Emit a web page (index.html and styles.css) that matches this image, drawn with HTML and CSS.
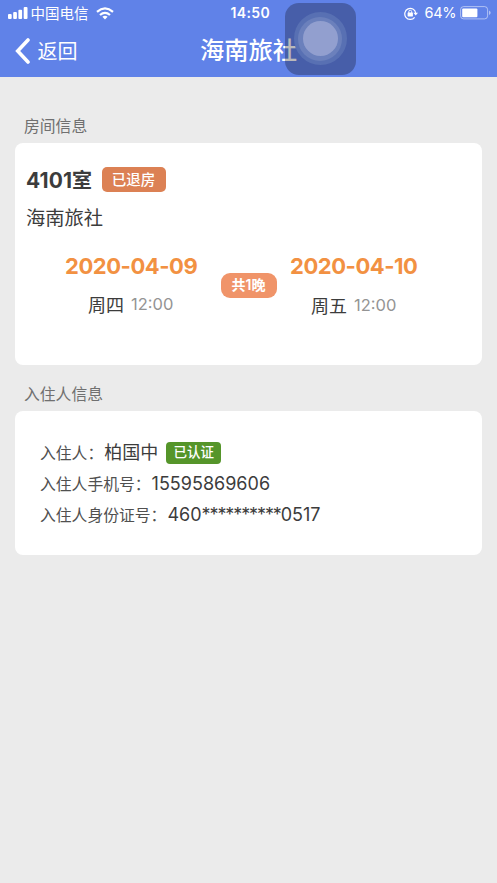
FILE: index.html
```html
<!DOCTYPE html>
<html lang="zh-CN">
<head>
<meta charset="utf-8">
<title>海南旅社</title>
<link rel="stylesheet" href="styles.css">
</head>
<body>
<header class="header">
  <div class="status">
    <div class="status-left">
      <svg class="signal" viewBox="0 0 20 12" fill="#fff"><rect x="0" y="7" width="3.7" height="5" rx="1"/><rect x="5.2" y="5" width="3.7" height="7" rx="1"/><rect x="10.4" y="2.8" width="3.7" height="9.2" rx="1"/><rect x="15.7" y="0" width="3.8" height="12" rx="1"/></svg>
      <span class="carrier">中国电信</span>
      <svg class="wifi" viewBox="0 0 18 13" fill="none" stroke="#fff" stroke-width="2.3"><path d="M1 4.8Q9-2 17 4.8"/><path d="M4 8Q9 3.7 14 8"/><path d="M6.4 9.7Q9 7.6 11.6 9.7L9 12.4Z" fill="#fff" stroke="none"/></svg>
    </div>
    <span class="clock">14:50</span>
    <div class="status-right">
      <svg class="lock" viewBox="0 0 14 13" fill="none" stroke="#fff"><path d="M10.6 10.3A5.5 5.5 0 1 1 11.7 6" stroke-width="1.2"/><path d="M9.4 5.7h4.6l-2.3 2.8z" fill="#fff" stroke="none"/><rect x="3.6" y="5.5" width="5.3" height="4" rx=".4" fill="#fff" stroke="none"/><path d="M4.8 6V4.7a1.45 1.45 0 0 1 2.9 0V6" stroke-width=".9"/></svg>
      <span class="percent">64%</span>
      <svg class="battery" viewBox="0 0 32 14"><rect x=".6" y=".6" width="27" height="12.3" rx="3" fill="none" stroke="#fff" stroke-opacity=".5"/><rect x="2.2" y="2.4" width="15.2" height="8.8" rx="1" fill="#fff"/><path d="M29 4.5q1.7.8 1.7 2.3T29 9.1z" fill="#fff" fill-opacity=".5"/></svg>
    </div>
  </div>
  <nav class="nav">
    <a class="back"><svg class="chevron" viewBox="0 0 16 26"><path d="M13 2 2.7 13 13 24" fill="none" stroke="#fff" stroke-width="3.6" stroke-linecap="round" stroke-linejoin="miter"/></svg><span>返回</span></a>
    <h1 class="title">海南旅社</h1>
  </nav>
  <div class="assist"><div class="ring ring-outer"><div class="ring ring-middle"><div class="ring ring-inner"></div></div></div></div>
</header>
<main class="content">
  <h2 class="label">房间信息</h2>
  <section class="card room">
    <div class="room-head"><strong class="room-name"><span class="room-number">4101</span>室</strong><span class="tag tag-out">已退房</span></div>
    <div class="hotel">海南旅社</div>
    <div class="stay">
      <div class="day day-in"><div class="date">2020-04-09</div><div class="time"><span>周四</span><span class="hour">12:00</span></div></div>
      <span class="nights">共1晚</span>
      <div class="day day-out"><div class="date">2020-04-10</div><div class="time time-out"><span>周五</span><span class="hour">12:00</span></div></div>
    </div>
  </section>
  <h2 class="label label-guest">入住人信息</h2>
  <section class="card guest">
    <div class="row"><span class="key">入住人：</span><span class="name">柏国中</span><span class="tag tag-ok">已认证</span></div>
    <div class="row"><span class="key">入住人手机号：</span><span class="value phone">15595869606</span></div>
    <div class="row"><span class="key">入住人身份证号：</span><span class="value">460<span class="mask">**********</span>0517</span></div>
  </section>
</main>
</body>
</html>
```
FILE: styles.css
```css
* { box-sizing: border-box; }
body { margin: 0; min-height: 883px; background: #ebebeb; color: #3c3c3c; font-family: Inter, "Noto Sans CJK SC", sans-serif; }
svg { display: block; flex: none; }
span, strong, .date, .hotel, .title { white-space: nowrap; }
.header { position: relative; height: 77px; background: #6082e8; color: #fff; }
.status { height: 25px; display: grid; grid-template-columns: 1fr auto 1fr; align-items: center; padding: 0 5px 0 7.5px; }
.status-left, .status-right { display: flex; align-items: center; }
.status-right { justify-content: flex-end; }
.signal { width: 20px; height: 12px; }
.carrier { margin-left: 3px; font-size: 14.5px; line-height: 24px; padding-top: 1px; }
.wifi { width: 18px; height: 13px; margin-left: 7px; }
.clock { font-size: 14px; font-weight: 600; letter-spacing: .4px; line-height: 26px; padding-left: 1px; }
.lock { width: 14px; height: 13px; margin-right: 7px; }
.percent { font-size: 14.5px; letter-spacing: -.4px; line-height: 26px; }
.battery { width: 32px; height: 14px; margin-left: 4px; }
.nav { height: 51px; display: grid; grid-template-columns: 1fr auto 1fr; align-items: center; padding: 0 14.5px; }
.back { display: flex; align-items: center; font-size: 20px; line-height: 30px; }
.back span { padding-top: 2px; }
.chevron { width: 16px; height: 26px; margin-right: 7px; }
.title { margin: 0 0 1px; font-size: 24.3px; line-height: 36px; font-weight: 500; }
.assist { position: absolute; left: 284.5px; top: 3px; width: 71.5px; height: 71.5px; border-radius: 14px; background: rgba(8, 5, 7, .28); display: flex; align-items: center; justify-content: center; }
.ring { border-radius: 50%; display: flex; align-items: center; justify-content: center; }
.ring-outer { width: 53px; height: 53px; background: #5870b3; }
.ring-middle { width: 44px; height: 44px; background: #6b80bc; }
.ring-inner { width: 35px; height: 35px; background: #929fcf; }
.content { padding: 38px 15px 0; }
.label { margin: 0 0 4px; padding-left: 9px; height: 24px; font-size: 15.8px; line-height: 24px; font-weight: 400; color: #707070; }
.label-guest { margin-top: 18px; }
.card { background: #fff; border-radius: 8px; }
.room { height: 222px; padding: 22px 11px 0; }
.room-head { height: 30px; display: flex; align-items: center; }
.room-name { font-size: 20px; line-height: 30px; padding-top: 2px; }
.room-number { font-size: 21px; letter-spacing: .1px; }
.tag { display: flex; align-items: center; justify-content: center; color: #fff; font-weight: 500; }
.tag-out { width: 64px; height: 25px; margin: -1px 0 0 9.5px; border-radius: 5px; background: #dc8154; font-size: 14.5px; line-height: 23px; padding-bottom: 1px; }
.hotel { margin-top: 8px; font-size: 19.3px; line-height: 30px; }
.stay { display: flex; align-items: flex-start; margin-top: 17px; padding-left: 39px; }
.day { width: 133px; }
.day-out { margin-left: 14px; }
.date { font-size: 22px; line-height: 32px; letter-spacing: -.45px; font-weight: 700; color: #f29142; }
.time { display: flex; align-items: center; height: 28px; margin: 8px 0 0 23px; font-size: 18px; }
.time-out { margin: 9px 0 0 21px; }
.hour { margin-left: 7px; font-size: 16.5px; color: #949494; }
.nights { width: 56px; height: 25px; margin: 23px 0 0 22.5px; border-radius: 9px; background: #f09469; color: #fff; font-size: 14px; font-weight: 600; line-height: 24px; text-align: center; }
.day-out { margin-left: 13.5px; }
.guest { height: 144px; padding: 26px 25px 0; }
.row { display: flex; align-items: center; height: 31px; }
.key { font-size: 15.8px; line-height: 24px; padding-top: 3px; margin-right: 1px; color: #505050; }
.name { font-size: 18px; line-height: 26px; }
.value { font-size: 18px; }
.mask { letter-spacing: -1.1px; }
.tag-ok { width: 55px; height: 22px; margin: 0 0 0 8px; border-radius: 4px; background: #55952a; font-size: 13.5px; line-height: 20px; padding-bottom: 2px; }
```
